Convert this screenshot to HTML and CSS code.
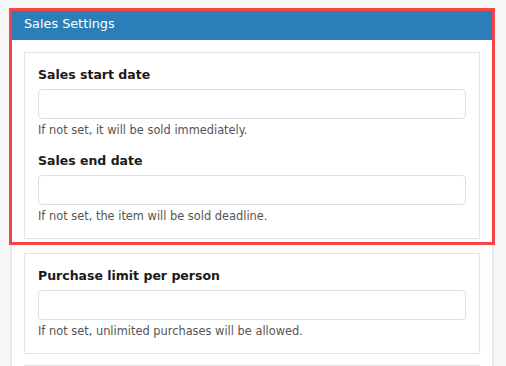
FILE: index.html
```html
<!DOCTYPE html>
<html lang="en">
<head>
    <meta charset="UTF-8">
    <meta name="viewport" content="width=device-width, initial-scale=1.0">
    <title>Sales Settings</title>
    <link rel="stylesheet" href="styles.css">
</head>
<body>
    <div class="panel">
        <!-- highlighted block: header + sales period card -->
        <div class="highlight">
            <div class="panel-header">Sales Settings</div>
            <div class="card">
                <label class="field-label" for="salesStart">Sales start date</label>
                <input type="text" id="salesStart" class="field-input">
                <p class="field-help">If not set, it will be sold immediately.</p>

                <label class="field-label second" for="salesEnd">Sales end date</label>
                <input type="text" id="salesEnd" class="field-input">
                <p class="field-help">If not set, the item will be sold deadline.</p>
            </div>
        </div>

        <div class="card">
            <label class="field-label" for="purchaseLimit">Purchase limit per person</label>
            <input type="text" id="purchaseLimit" class="field-input">
            <p class="field-help">If not set, unlimited purchases will be allowed.</p>
        </div>

        <div class="card last"></div>
    </div>
</body>
</html>
```

FILE: styles.css
```css
body {
    margin: 0;
    background-color: #f7f7f7;
    font-family: "DejaVu Sans", Verdana, sans-serif;
    color: #222;
}
.panel {
    margin: 9px 12px 0 10px;
    border: 2px solid #e8e8e8;
    border-bottom: none;
    background-color: #fff;
    padding-bottom: 40px;
}
.highlight {
    outline: 3px solid #f44646;
    padding-bottom: 3px;
}
.panel-header {
    background-color: #2a7fb8;
    color: #fff;
    font-size: 12.8px;
    line-height: 18px;
    padding: 4px 12px 7px;
}
.card {
    margin: 11px 12px 0;
    padding: 13px 13px 14px;
    border: 1px solid #e4e4e4;
    box-shadow: 0 0 2px rgba(0, 0, 0, 0.05);
    background-color: #fff;
}
.highlight .card {
    margin-top: 12px;
}
.card.last {
    margin-top: 11px;
    height: 60px;
}
.field-label {
    display: block;
    font-size: 12.5px;
    font-weight: bold;
    line-height: 18px;
    margin-bottom: 5px;
    color: #1a1a1a;
}
.field-label.second {
    margin-top: 14px;
}
.field-input {
    display: block;
    box-sizing: border-box;
    width: 100%;
    height: 30px;
    border: 1px solid #dedede;
    border-radius: 4px;
    background-color: #fff;
    font-family: inherit;
    font-size: 13px;
    padding: 0 8px;
    margin: 0;
}
.field-help {
    margin: 3px 0 0;
    font-size: 11.4px;
    line-height: 16px;
    color: #555;
}
```
